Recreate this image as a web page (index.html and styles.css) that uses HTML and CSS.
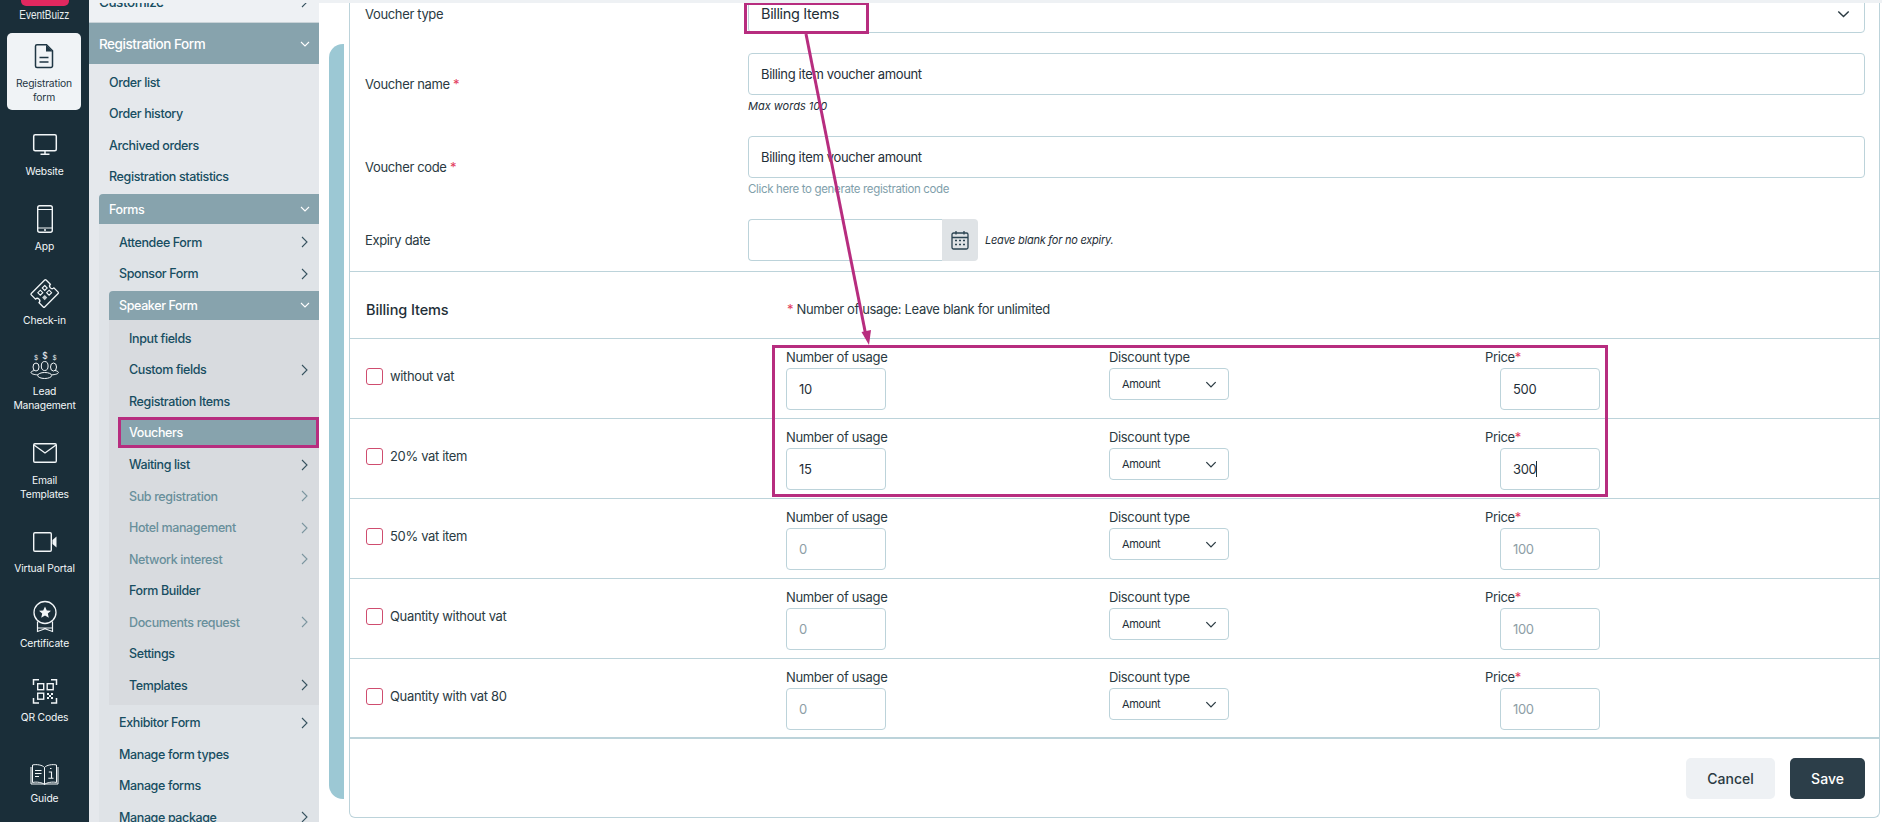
FILE: index.html
```html
<!DOCTYPE html>
<html lang="en">
<head>
<meta charset="utf-8">
<title>Vouchers</title>
<link rel="stylesheet" href="styles.css">
</head>
<body>
<svg class="defs" width="0" height="0" aria-hidden="true">
  <symbol id="cr" viewBox="0 0 7 12"><path d="M1 1l5 5-5 5" fill="none" stroke="currentColor" stroke-width="1.1"/></symbol>
  <symbol id="cd" viewBox="0 0 10 6"><path d="M1 1l4 4 4-4" fill="none" stroke="currentColor" stroke-width="1.1"/></symbol>
</svg>
<div class="app">
  <nav class="rail">
    <div class="logo"><div class="logo-mark"></div><span class="logo-text">EventBuizz</span></div>
    <div class="rail-list">
      <a class="rail-item active">
        <svg class="ri" viewBox="0 0 36 36"><path d="M11 4.800h9.500l6 6V26a1.500 1.500 0 0 1-1.500 1.500H11A1.500 1.500 0 0 1 9.500 26V6.300A1.500 1.500 0 0 1 11 4.800z" fill="none" stroke="currentColor" stroke-width="1.500"/><path d="M20 5v6.500h6.500z" fill="currentColor"/><path d="M13.500 17.500h9M13.500 22h9" stroke="currentColor" stroke-width="1.500"/></svg>
        <span>Registration<br>form</span>
      </a>
      <a class="rail-item up6">
        <svg class="ri" viewBox="0 0 36 36"><rect x="6.700" y="6.700" width="22.600" height="16" rx="1.500" fill="none" stroke="currentColor" stroke-width="1.500"/><path d="M18 23v3M13.500 26.300h9" stroke="currentColor" stroke-width="1.500"/></svg>
        <span>Website</span>
      </a>
      <a class="rail-item">
        <svg class="ri" viewBox="0 0 36 36"><rect x="10.700" y="2.700" width="14.600" height="26.600" rx="2" fill="none" stroke="currentColor" stroke-width="1.400"/><path d="M11 6.500h14M11 25h14" stroke="currentColor" stroke-width="1.200"/><circle cx="18" cy="27" r="1" fill="currentColor"/></svg>
        <span>App</span>
      </a>
      <a class="rail-item">
        <svg class="ri" viewBox="0 0 36 36"><path transform="rotate(-45 17.700 16.500)" d="M8.200 7h19a1 1 0 0 1 1 1v6a2.500 2.500 0 0 0 0 5v6a1 1 0 0 1-1 1h-19a1 1 0 0 1-1-1v-6a2.500 2.500 0 0 0 0-5V8a1 1 0 0 1 1-1z" fill="none" stroke="currentColor" stroke-width="1.300"/><path d="M17.700 8.500l2.500 2.500-2.500 2.500-2.500-2.500zM13.300 13.200l2.500 2.500-2.500 2.500-2.500-2.500zM22.100 13.200l2.500 2.500-2.500 2.500-2.500-2.500z" fill="none" stroke="currentColor" stroke-width="1.100"/><path d="M17.700 18l2.600 2.600-2.600 2.600-2.600-2.600z" fill="currentColor" opacity=".8"/></svg>
        <span>Check-in</span>
      </a>
      <a class="rail-item up3">
        <svg class="ri" viewBox="0 0 36 36"><text x="7" y="12" class="dollar">$</text><text x="15.200" y="11" class="dollar big">$</text><text x="25.500" y="12" class="dollar">$</text><g fill="none" stroke="currentColor" stroke-width="1"><ellipse cx="17.700" cy="18" rx="3.400" ry="4.500"/><ellipse cx="9" cy="19" rx="3" ry="4"/><ellipse cx="26.500" cy="19" rx="3" ry="4"/><ellipse cx="17.700" cy="27.500" rx="7" ry="3"/><path d="M10.800 26.800c-3.500 0-6.800-1-6.800-2.300 0-1 2-1.800 3.500-2M24.600 26.800c3.500 0 6.800-1 6.800-2.300 0-1-2-1.800-3.500-2"/></g></svg>
        <span>Lead<br>Management</span>
      </a>
      <a class="rail-item down1">
        <svg class="ri" viewBox="0 0 36 36"><rect x="6.700" y="6.700" width="22.600" height="18.600" rx="1.200" fill="none" stroke="currentColor" stroke-width="1.400"/><path d="M7 8l11 8 11-8" fill="none" stroke="currentColor" stroke-width="1.400"/></svg>
        <span>Email<br>Templates</span>
      </a>
      <a class="rail-item">
        <svg class="ri" viewBox="0 0 36 36"><rect x="6.700" y="7.700" width="17.600" height="18.600" rx="1.200" fill="none" stroke="currentColor" stroke-width="1.400"/><path d="M25.500 15l4-3.500v11l-4-3.500z" fill="currentColor"/></svg>
        <span>Virtual Portal</span>
      </a>
      <a class="rail-item down1">
        <svg class="ri" viewBox="0 0 36 36"><circle cx="18" cy="12.500" r="11" fill="none" stroke="currentColor" stroke-width="1.300"/><path d="M18 6.500l1.800 3.900 4.200.4-3.200 2.800 1 4.100-3.800-2.200-3.800 2.200 1-4.100-3.200-2.800 4.200-.4z" fill="currentColor"/><path d="M10.500 21.500V31.500l7.500-2.700 7.500 2.700V21.500M10.500 28h15" fill="none" stroke="currentColor" stroke-width="1.200"/></svg>
        <span>Certificate</span>
      </a>
      <a class="rail-item">
        <svg class="ri" viewBox="0 0 36 36"><path d="M6.500 11V5.700H12M24 5.700h5.500V11M6.500 24v5H12M24 29h5.500v-5" fill="none" stroke="currentColor" stroke-width="1.500"/><rect x="10.700" y="9.700" width="6" height="6" fill="none" stroke="currentColor" stroke-width="1.400"/><rect x="20.200" y="9.700" width="6" height="6" fill="none" stroke="currentColor" stroke-width="1.400"/><rect x="10.700" y="19.200" width="6" height="6" fill="none" stroke="currentColor" stroke-width="1.400"/><path d="M20 19h2v2h-2zM24 19h2v2h-2zM22 21h2v2h-2zM20 23h2v2h-2zM24 23h2v2h-2z" fill="currentColor"/></svg>
        <span>QR Codes</span>
      </a>
      <a class="rail-item down7">
        <svg class="ri" viewBox="0 0 36 36"><g fill="none" stroke="currentColor" stroke-width="1"><path d="M17.500 12.500c-2-2.500-8-3.500-12-2.500v17.500c4-1 10 0 12 2 2-2 8-3 12-2V10c-4-1-10 0-12 2.500zM17.500 12.500v17"/><path d="M4 12v17h27V12"/><path d="M8 15.500h6.500M8 18.500h6.500M8 21.500h4"/></g><path d="M23 13.500h1.500M21.800 17h2.700v6M21.300 23.300h5.200" fill="none" stroke="currentColor" stroke-width="1.100"/></svg>
        <span>Guide</span>
      </a>
    </div>
  </nav>

  <div class="shell">
    <div class="topbar"></div>
    <div class="workspace">
      <aside class="side">
        <div class="side-inner">
          <div class="m customize"><span>Customize</span><svg class="cr"><use href="#cr"/></svg></div>
          <div class="h h0"><span>Registration Form</span><svg class="cd"><use href="#cd"/></svg></div>
          <div class="g0">
            <div class="m">Order list</div>
            <div class="m">Order history</div>
            <div class="m">Archived orders</div>
            <div class="m">Registration statistics</div>
          </div>
          <div class="h h1"><span>Forms</span><svg class="cd"><use href="#cd"/></svg></div>
          <div class="g1">
            <div class="m"><span>Attendee Form</span><svg class="cr"><use href="#cr"/></svg></div>
            <div class="m"><span>Sponsor Form</span><svg class="cr"><use href="#cr"/></svg></div>
            <div class="h h2"><span>Speaker Form</span><svg class="cd"><use href="#cd"/></svg></div>
            <div class="g2">
              <div class="m">Input fields</div>
              <div class="m"><span>Custom fields</span><svg class="cr"><use href="#cr"/></svg></div>
              <div class="m">Registration Items</div>
              <div class="cur">Vouchers</div>
              <div class="m"><span>Waiting list</span><svg class="cr"><use href="#cr"/></svg></div>
              <div class="m off"><span>Sub registration</span><svg class="cr"><use href="#cr"/></svg></div>
              <div class="m off"><span>Hotel management</span><svg class="cr"><use href="#cr"/></svg></div>
              <div class="m off"><span>Network interest</span><svg class="cr"><use href="#cr"/></svg></div>
              <div class="m">Form Builder</div>
              <div class="m off"><span>Documents request</span><svg class="cr"><use href="#cr"/></svg></div>
              <div class="m">Settings</div>
              <div class="m"><span>Templates</span><svg class="cr"><use href="#cr"/></svg></div>
            </div>
            <div class="m"><span>Exhibitor Form</span><svg class="cr"><use href="#cr"/></svg></div>
            <div class="m">Manage form types</div>
            <div class="m">Manage forms</div>
            <div class="m"><span>Manage package</span><svg class="cr"><use href="#cr"/></svg></div>
          </div>
        </div>
      </aside>

      <main class="main">
        <div class="strip"></div>
        <div class="card">
          <section class="form">
            <div class="frow">
              <label class="flabel top">Voucher type</label>
              <div class="control">
                <div class="input wide typesel"><span>Billing Items</span><svg class="cd big"><use href="#cd"/></svg></div>
              </div>
            </div>
            <div class="frow">
              <label class="flabel helped">Voucher name <i class="req">*</i></label>
              <div class="control">
                <div class="input wide">Billing item voucher amount</div>
                <div class="help">Max words 100</div>
              </div>
            </div>
            <div class="frow">
              <label class="flabel helped">Voucher code <i class="req">*</i></label>
              <div class="control">
                <div class="input wide">Billing item voucher amount</div>
                <a class="gen">Click here to generate registration code</a>
              </div>
            </div>
            <div class="frow last">
              <label class="flabel">Expiry date</label>
              <div class="control dateline">
                <div class="input date"></div>
                <div class="calbtn">
                  <svg width="18" height="20" viewBox="0 0 18 20"><rect x="1" y="3" width="16" height="16" rx="1.500" fill="none" stroke="#2b4452" stroke-width="1.300"/><path d="M1 7.500h16M5 1v3.500M13 1v3.500" stroke="#2b4452" stroke-width="1.300"/><path d="M4 10.500h2M8 10.500h2M12 10.500h2M4 14.500h2M8 14.500h2M12 14.500h2" stroke="#2b4452" stroke-width="1.400"/></svg>
                </div>
                <span class="help inline">Leave blank for no expiry.</span>
              </div>
            </div>
          </section>

          <div class="bhead">
            <h3 class="btitle">Billing Items</h3>
            <p class="bnote"><i class="req">*</i> Number of usage: Leave blank for unlimited</p>
          </div>

          <div class="brow">
            <div class="bname"><span class="check"></span>without vat</div>
            <div class="usage"><div class="blabel">Number of usage</div><div class="input num">10</div></div>
            <div class="disc"><div class="blabel">Discount type</div><div class="input sel"><span>Amount</span><svg class="cd dark"><use href="#cd"/></svg></div></div>
            <div class="price"><div class="blabel">Price<i class="req">*</i></div><div class="input num pr">500</div></div>
          </div>
          <div class="brow">
            <div class="bname"><span class="check"></span>20% vat item</div>
            <div class="usage"><div class="blabel">Number of usage</div><div class="input num">15</div></div>
            <div class="disc"><div class="blabel">Discount type</div><div class="input sel"><span>Amount</span><svg class="cd dark"><use href="#cd"/></svg></div></div>
            <div class="price"><div class="blabel">Price<i class="req">*</i></div><div class="input num pr"><span class="caret">300</span></div></div>
          </div>
          <div class="brow">
            <div class="bname"><span class="check"></span>50% vat item</div>
            <div class="usage"><div class="blabel">Number of usage</div><div class="input num ph">0</div></div>
            <div class="disc"><div class="blabel">Discount type</div><div class="input sel"><span>Amount</span><svg class="cd dark"><use href="#cd"/></svg></div></div>
            <div class="price"><div class="blabel">Price<i class="req">*</i></div><div class="input num pr ph">100</div></div>
          </div>
          <div class="brow">
            <div class="bname"><span class="check"></span>Quantity without vat</div>
            <div class="usage"><div class="blabel">Number of usage</div><div class="input num ph">0</div></div>
            <div class="disc"><div class="blabel">Discount type</div><div class="input sel"><span>Amount</span><svg class="cd dark"><use href="#cd"/></svg></div></div>
            <div class="price"><div class="blabel">Price<i class="req">*</i></div><div class="input num pr ph">100</div></div>
          </div>
          <div class="brow endrow">
            <div class="bname"><span class="check"></span>Quantity with vat 80</div>
            <div class="usage"><div class="blabel">Number of usage</div><div class="input num ph">0</div></div>
            <div class="disc"><div class="blabel">Discount type</div><div class="input sel"><span>Amount</span><svg class="cd dark"><use href="#cd"/></svg></div></div>
            <div class="price"><div class="blabel">Price<i class="req">*</i></div><div class="input num pr ph">100</div></div>
          </div>

          <div class="actions">
            <button class="btn cancel">Cancel</button>
            <button class="btn save">Save</button>
          </div>
        </div>
      </main>
    </div>
  </div>

  <svg class="notes" viewBox="0 0 1882 822" aria-hidden="true">
    <rect x="745.500" y="3.500" width="122" height="29"/>
    <rect x="773.500" y="346.500" width="833" height="149"/>
    <path d="M806 34L866 336"/>
    <polygon points="869,345 861.500,332 871,330"/>
  </svg>
</div>
</body>
</html>
```

FILE: styles.css
```css
* { box-sizing: border-box; }
html, body { margin: 0; height: 100%; overflow: hidden; background: #fff; }
body { font-family: Inter, "Liberation Sans", sans-serif; font-size: 13px; color: #2a3a42; }
.defs { position: absolute; }

.app { position: relative; display: flex; width: 1882px; height: 822px; overflow: hidden; }

/* rail */
.rail { width: 89px; flex: none; background: #1a2e39; color: #fff; display: flex; flex-direction: column; }
.logo { height: 33px; display: flex; flex-direction: column; align-items: center; }
.logo-mark { width: 48px; height: 6px; background: #e0285f; border-radius: 0 0 5px 5px; }
.logo-text { font-family: "Liberation Sans", sans-serif; font-size: 12.500px; line-height: 13px; margin-top: 2.500px; transform: scaleX(.8); color: #e8eef0; }
.rail-list { display: flex; flex-direction: column; gap: 24px; }
.rail-item { display: flex; flex-direction: column; align-items: center; text-align: center; font-size: 10.300px; line-height: 14px; letter-spacing: -.15px; color: #f2f6f8; }
.ri { width: 36px; height: 36px; flex: none; display: block; }
.active { margin: 0 8px 0 7px; height: 77px; padding-top: 7px; background: #f0f3f6; color: #1f3644; border-radius: 5px; }
.up6 { margin: -6px 0 1px; }
.up3 { margin-top: -3px; }
.down1 { margin-top: 1px; }
.down7 { margin-top: 7px; }
.dollar { font-family: Inter, sans-serif; font-size: 6.500px; fill: currentColor; }
.dollar.big { font-size: 8.500px; }

/* shell */
.shell { flex: 1; min-width: 0; display: flex; flex-direction: column; }
.topbar { height: 3px; flex: none; background: #eef1f4; position: relative; z-index: 2; }
.workspace { flex: 1; min-height: 0; display: flex; }

/* side menu */
.side { width: 230px; flex: none; overflow: hidden; background: #e5e8ec; color: #174d61; font-weight: 500; font-size: 12.500px; letter-spacing: -.38px; }
.side-inner { margin-top: -16px; }
.m { height: 31.500px; display: flex; align-items: center; justify-content: space-between; padding-right: 11px; }
.cr { width: 7px; height: 12px; color: #36525f; flex: none; }
.cd { width: 10px; height: 6px; color: #fff; flex: none; }
.customize { height: 36px; background: #eef1f4; padding: 0 11px 5px 10px; border-bottom: 1px solid #c9d3d8; font-size: 13.500px; letter-spacing: -.45px; }
.h { display: flex; align-items: center; justify-content: space-between; background: #87a3ad; color: #fff; padding-right: 9px; }
.h0 { height: 41px; padding-left: 10px; font-size: 13.500px; letter-spacing: -.45px; }
.h1 { height: 30px; margin-left: 10px; padding-left: 10px; border-radius: 4px 0 0 0; }
.h2 { height: 29px; margin: 1px 0 0 10px; padding-left: 10px; border-radius: 4px 0 0 0; }
.g0 { padding: 2.250px 0 1.750px 20px; }
.g1 { margin-left: 10px; background: #dfe3e7; padding: 2.500px 0 0 0; }
.g1 > .m { padding-left: 20px; }
.g2 { margin-left: 10px; background: #d8dbdf; padding: 3px 0 4px 0; }
.g2 > .m { padding-left: 20px; }
.cur { height: 31px; margin: 0 0 1px 9px; padding-left: 8px; display: flex; align-items: center; background: #87a3ad; color: #fff; border: 3px solid #b72d7f; }
.off { color: #688f9b; }
.off .cr { color: #7b959f; }
.g1 > .g2 + .m { margin-top: 2px; }

/* main */
.main { flex: 1; min-width: 0; display: flex; overflow: hidden; padding: 0 2px 0 10px; letter-spacing: -.35px; }
.strip { width: 15px; flex: none; height: 755px; margin: 41px 5px 0 0; background: #9cc8d4; border-radius: 14px 0 0 14px; }
.card { flex: 1; min-width: 0; height: 827px; margin-top: -12px; background: #fff; border: 1px solid #bcd3da; border-top: 0; border-radius: 0 0 6px 6px; align-self: flex-start; }

.form { padding: 0 14px 0 15px; }
.frow { display: flex; align-items: center; margin-bottom: 20px; }
.frow.last { margin-bottom: 10px; }
.flabel { width: 383px; flex: none; font-size: 13px; color: #2a3a42; }
.flabel.top { padding-top: 4px; }
.flabel.helped { padding-bottom: 2px; }
.req { color: #e23b5d; font-style: normal; }
.control { flex: 1; min-width: 0; }
.input { border: 1px solid #bcd3da; border-radius: 4px; background: #fff; display: flex; align-items: center; font-size: 13px; color: #1f2f38; }
.wide { height: 42px; padding: 0 12px; }
.typesel { justify-content: space-between; padding: 3px 14px 0 12px; font-size: 14.500px; }
.cd.big { width: 13px; height: 8px; color: #2a3a42; }
.help { display: block; height: 21px; padding-top: 4px; font-size: 11px; line-height: 14px; font-style: italic; color: #1f2f38; letter-spacing: 0; }
.gen { display: block; height: 21px; padding-top: 4px; font-size: 11.500px; line-height: 14px; color: #7fa0ab; }
.dateline { display: flex; align-items: center; }
.date { width: 194px; height: 42px; border-right: 0; border-radius: 4px 0 0 4px; }
.calbtn { width: 36px; height: 42px; background: #dfe3e6; border-radius: 0 4px 4px 0; display: flex; align-items: center; justify-content: center; }
.help.inline { height: auto; padding: 0; margin-left: 7px; letter-spacing: -.25px; }

.bhead { height: 68px; padding: 8px 15px 0 16px; display: flex; align-items: center; border-top: 1px solid #bcd3da; border-bottom: 1px solid #bcd3da; }
.btitle { width: 421px; flex: none; margin: 0; font-size: 14.500px; font-weight: 500; color: #1f2f38; letter-spacing: -.1px; }
.bnote { margin: 0; font-size: 13px; }

.brow { height: 80px; display: flex; padding: 8px 0 0 16px; border-bottom: 1px solid #bcd3da; }
.endrow { border-bottom-width: 2px; }
.bname { width: 420px; flex: none; height: 18px; margin-top: 20px; display: flex; align-items: center; font-size: 13px; }
.check { width: 17px; height: 17px; margin-right: 7px; border: 1px solid #cf4d6f; border-radius: 3px; background: #fff; }
.usage { width: 323px; flex: none; }
.disc { width: 376px; flex: none; }
.price { width: 116px; flex: none; }
.blabel { height: 20px; line-height: 20px; margin-bottom: 1px; font-size: 13px; }
.num { width: 100px; height: 42px; padding: 0 12px; }
.pr { margin-left: 15px; }
.ph { color: #8d9ea6; }
.sel { width: 120px; height: 32px; padding: 0 12px; justify-content: space-between; font-size: 11px; }
.cd.dark { width: 12px; height: 7px; color: #2a3a42; margin-right: -1px; }
.caret { border-right: 1px solid #1f2f38; padding-right: 0; }

.actions { display: flex; justify-content: flex-end; gap: 15px; padding: 19px 14px 0 0; }
.btn { height: 41px; border: 0; border-radius: 5px; font: 500 14px Inter, sans-serif; letter-spacing: 0; }
.cancel { width: 89px; background: #eef1f4; color: #2a3a42; }
.save { width: 75px; background: #2c3e49; color: #fff; }

/* annotations drawn over the screenshot */
.notes { position: absolute; left: 0; top: 0; width: 1882px; height: 822px; pointer-events: none; }
.notes rect { fill: none; stroke: #b72d7f; stroke-width: 3; }
.notes path { fill: none; stroke: #b72d7f; stroke-width: 3; }
.notes polygon { fill: #b72d7f; }
```
